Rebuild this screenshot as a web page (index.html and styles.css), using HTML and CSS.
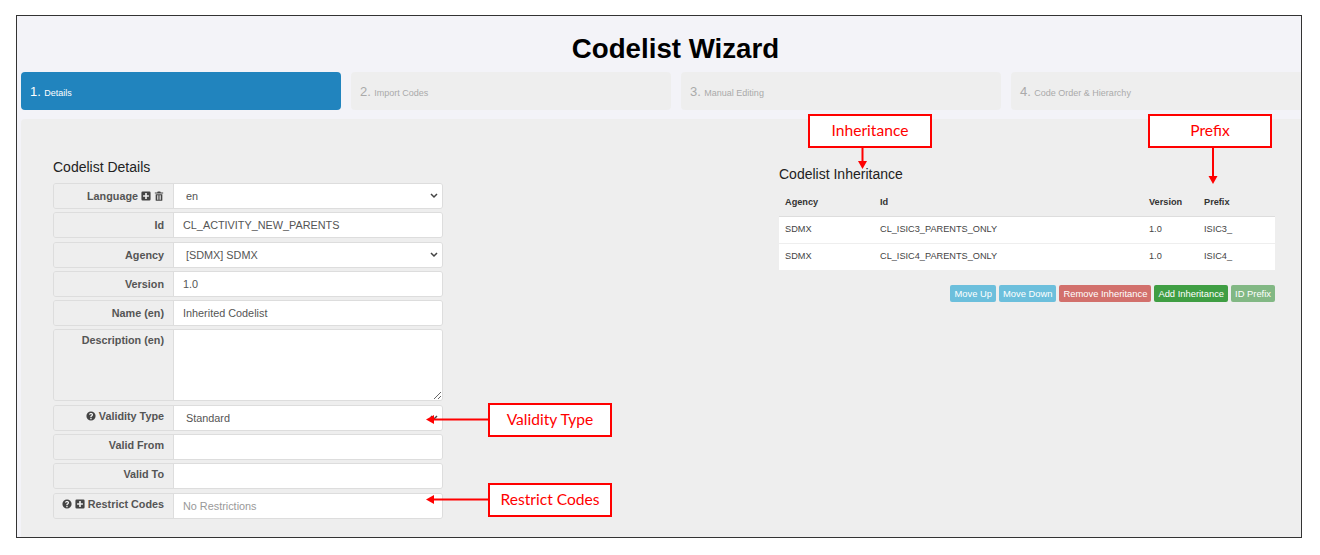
FILE: index.html
```html
<!DOCTYPE html>
<html lang="en">
<head>
    <meta charset="UTF-8">
    <title>Codelist Wizard</title>
    <link rel="stylesheet" href="styles.css">
</head>
<body>
    <div class="frame">
        <h1>Codelist Wizard</h1>

        <div class="steps">
            <div class="step active"><span class="num">1.</span> Details</div>
            <div class="step"><span class="num">2.</span> Import Codes</div>
            <div class="step"><span class="num">3.</span> Manual Editing</div>
            <div class="step last"><span class="num">4.</span> Code Order &amp; Hierarchy</div>
        </div>

        <div class="content">
            <div class="details">
                <h4>Codelist Details</h4>
                <div class="form-row">
                    <label>Language
                        <svg class="icon" viewBox="0 0 12 12"><path d="M2 .5h8A1.5 1.5 0 0 1 11.500 2v8a1.500 1.500 0 0 1-1.500 1.500H2A1.500 1.500 0 0 1 .5 10V2A1.500 1.500 0 0 1 2 .5zM5 2.500v2.500H2.500v2H5v2.500h2V7h2.500V5H7V2.500z" fill-rule="evenodd"/></svg>
                        <svg class="icon" viewBox="0 0 12 12"><path d="M4.500.5h3l.7 1.300H11v1.200H1V1.800h2.800zM2 3.800h8V11a.8.8 0 0 1-.8.8H2.800A.8.8 0 0 1 2 11zM3.800 5v5.500h.9V5zm1.800 0v5.500h.9V5zm1.800 0v5.500h.9V5z" fill-rule="evenodd"/></svg>
                    </label>
                    <select><option>en</option></select>
                </div>
                <div class="form-row"><label>Id</label><input type="text" value="CL_ACTIVITY_NEW_PARENTS"></div>
                <div class="form-row"><label>Agency</label><select><option>[SDMX] SDMX</option></select></div>
                <div class="form-row"><label>Version</label><input type="text" value="1.0"></div>
                <div class="form-row"><label>Name (en)</label><input type="text" value="Inherited Codelist"></div>
                <div class="form-row tall raised"><label>Description (en)</label><textarea></textarea></div>
                <div class="form-row raised">
                    <label>
                        <svg class="icon" viewBox="0 0 12 12"><path d="M6 .5a5.500 5.500 0 1 1 0 11 5.500 5.500 0 0 1 0-11zM5.100 8.300v1.500h1.700V8.300zM6 2.300c-1.400 0-2.400.8-2.500 2l1.500.3c.1-.6.400-.9 1-.9.500 0 .8.300.8.700 0 .4-.3.600-.8 1-.5.400-.9.800-.9 1.500v.6h1.700v-.4c0-.4.200-.5.700-.9.600-.5 1-1 1-1.800 0-1.300-1-2.100-2.500-2.100z" fill-rule="evenodd"/></svg>
                        Validity Type
                    </label>
                    <select><option>Standard</option></select>
                </div>
                <div class="form-row raised"><label>Valid From</label><input type="text"></div>
                <div class="form-row raised"><label>Valid To</label><input type="text"></div>
                <div class="form-row raised">
                    <label>
                        <svg class="icon" viewBox="0 0 12 12"><path d="M6 .5a5.500 5.500 0 1 1 0 11 5.500 5.500 0 0 1 0-11zM5.100 8.300v1.500h1.700V8.300zM6 2.300c-1.400 0-2.400.8-2.500 2l1.500.3c.1-.6.400-.9 1-.9.500 0 .8.300.8.700 0 .4-.3.600-.8 1-.5.400-.9.800-.9 1.500v.6h1.700v-.4c0-.4.200-.5.700-.9.600-.5 1-1 1-1.800 0-1.300-1-2.100-2.500-2.100z" fill-rule="evenodd"/></svg>
                        <svg class="icon" viewBox="0 0 12 12"><path d="M2 .5h8A1.500 1.500 0 0 1 11.500 2v8a1.500 1.500 0 0 1-1.500 1.500H2A1.500 1.500 0 0 1 .5 10V2A1.500 1.500 0 0 1 2 .5zM5 2.500v2.500H2.500v2H5v2.500h2V7h2.500V5H7V2.500z" fill-rule="evenodd"/></svg>
                        Restrict Codes
                    </label>
                    <input type="text" placeholder="No Restrictions">
                </div>
            </div>

            <div class="inheritance">
                <h4>Codelist Inheritance</h4>
                <table>
                    <thead>
                        <tr><th class="col-agency">Agency</th><th class="col-id">Id</th><th class="col-version">Version</th><th>Prefix</th></tr>
                    </thead>
                    <tbody>
                        <tr><td>SDMX</td><td>CL_ISIC3_PARENTS_ONLY</td><td>1.0</td><td>ISIC3_</td></tr>
                        <tr><td>SDMX</td><td>CL_ISIC4_PARENTS_ONLY</td><td>1.0</td><td>ISIC4_</td></tr>
                    </tbody>
                </table>
                <div class="actions">
                    <button class="btn info">Move Up</button>
                    <button class="btn info">Move Down</button>
                    <button class="btn danger">Remove Inheritance</button>
                    <button class="btn success">Add Inheritance</button>
                    <button class="btn success faded">ID Prefix</button>
                </div>
            </div>
        </div>
    </div>

    <!-- annotations on top of the screenshot -->
    <div class="callout c-inherit">Inheritance</div>
    <div class="callout c-prefix">Prefix</div>
    <div class="callout c-validity">Validity Type</div>
    <div class="callout c-restrict">Restrict Codes</div>
    <svg class="arrows" width="1320" height="555" viewBox="0 0 1320 555">
        <g stroke="#f00" stroke-width="2" fill="none">
            <path d="M862.500 148V162"/>
            <path d="M1213 148V178"/>
            <path d="M488 419.500H432"/>
            <path d="M488 499.500H432"/>
        </g>
        <g fill="#f00">
            <path d="M858 161h9l-4.500 8z"/>
            <path d="M1208.500 176h9l-4.500 8z"/>
            <path d="M434 415v9l-8-4.500z"/>
            <path d="M434 495v9l-8-4.500z"/>
        </g>
    </svg>
</body>
</html>
```

FILE: styles.css
```css
body {
    margin: 0;
    background-color: #fff;
    font-family: "Liberation Sans", Arial, sans-serif;
    color: #333;
}
.frame {
    box-sizing: border-box;
    width: 1286px;
    height: 523px;
    margin: 15px 0 0 16px;
    padding: 0 0 0 4px;
    border: 1px solid #333;
    background-color: #f3f3f8;
    overflow: hidden;
}
h1 {
    margin: 0;
    padding: 17px 0 0 29px;
    height: 39px;
    font-size: 27.700px;
    line-height: 32px;
    font-weight: bold;
    color: #000;
    text-align: center;
}
.steps {
    display: flex;
    gap: 10px;
    height: 38px;
}
.step {
    box-sizing: border-box;
    flex: none;
    width: 320px;
    padding-left: 9px;
    border-radius: 4px;
    background-color: #eee;
    color: #aaa;
    font-size: 9px;
    line-height: 40px;
}
.step.last {
    width: 290px;
    border-radius: 4px 0 0 4px;
}
.step.active {
    background-color: #2184be;
    color: #fff;
}
.num {
    font-size: 13px;
    margin-right: 1px;
}
.content {
    display: flex;
    height: 420px;
    margin-top: 9px;
    border-radius: 4px 0 0 0;
    background-color: #eee;
}
h4 {
    margin: 0;
    font-size: 14px;
    font-weight: normal;
    line-height: 16px;
    color: #222;
}
.details {
    flex: none;
    width: 390px;
    margin-left: 32px;
    padding-top: 40px;
}
.details h4 {
    margin-bottom: 8px;
}
.form-row {
    box-sizing: border-box;
    display: flex;
    height: 26px;
    margin-bottom: 3.300px;
    border: 1px solid #ddd;
    border-radius: 3px;
    overflow: hidden;
}
.form-row.tall {
    height: 72px;
}
.form-row label {
    box-sizing: border-box;
    display: block;
    flex: none;
    width: 120px;
    padding: 5px 9px 0 0;
    border-right: 1px solid #ddd;
    background-color: #eee;
    color: #555;
    font-size: 10.800px;
    font-weight: bold;
    line-height: 14px;
    text-align: right;
}
.form-row.raised label {
    padding-top: 3px;
}
.icon {
    width: 10px;
    height: 10px;
    vertical-align: -1px;
    fill: #444;
}
.form-row input,
.form-row select,
.form-row textarea {
    box-sizing: border-box;
    flex: 1;
    min-width: 0;
    height: 100%;
    margin: 0;
    border: none;
    border-radius: 0;
    outline: none;
    background-color: #fff;
    color: #555;
    font-family: "Liberation Sans", Arial, sans-serif;
    font-size: 10.850px;
}
.form-row input {
    padding: 0 9px;
}
.form-row select {
    padding: 0 12px;
    appearance: none;
    background-image: url("data:image/svg+xml,%3Csvg xmlns='http://www.w3.org/2000/svg' width='8' height='6'%3E%3Cpath d='M1 1l3 3 3-3' fill='none' stroke='%23444' stroke-width='1.500'/%3E%3C/svg%3E");
    background-repeat: no-repeat;
    background-position: right 4px center;
}
.form-row input::placeholder {
    color: #999;
}
.inheritance {
    flex: none;
    width: 496px;
    margin-left: 336px;
    padding-top: 47px;
}
.inheritance h4 {
    margin-bottom: 5px;
}
table {
    width: 100%;
    border-collapse: collapse;
    font-size: 9.200px;
}
th {
    height: 29px;
    padding: 0 0 0 6px;
    border-bottom: 1px solid #ddd;
    color: #333;
    text-align: left;
}
td {
    box-sizing: border-box;
    height: 27px;
    padding: 0 0 2px 6px;
    border-bottom: 1px solid #eee;
    background-color: #fff;
    color: #444;
}
.col-agency {
    width: 89px;
}
.col-id {
    width: 263px;
}
.col-version {
    width: 49px;
}
.actions {
    display: flex;
    justify-content: flex-end;
    gap: 3px;
    margin-top: 14px;
}
.btn {
    height: 17px;
    padding: 0 4px;
    border: none;
    border-radius: 2px;
    color: #fff;
    font-family: "Liberation Sans", Arial, sans-serif;
    font-size: 9.400px;
}
.btn.info {
    background-color: #6cbfdc;
}
.btn.danger {
    background-color: #d2706c;
}
.btn.success {
    background-color: #3f9e43;
}
.btn.faded {
    background-color: #82b884;
}
.callout {
    position: absolute;
    box-sizing: border-box;
    height: 34px;
    border: 2px solid #f00;
    background-color: #fff;
    color: #f00;
    font-family: Lato, sans-serif;
    font-size: 15.600px;
    line-height: 28px;
    text-align: center;
}
.c-inherit {
    left: 808px;
    top: 114px;
    width: 124px;
}
.c-prefix {
    left: 1148px;
    top: 114px;
    width: 124px;
}
.c-validity {
    left: 488px;
    top: 403px;
    width: 124px;
}
.c-restrict {
    left: 488px;
    top: 483px;
    width: 124px;
}
.arrows {
    position: absolute;
    left: 0;
    top: 0;
    pointer-events: none;
}
```
